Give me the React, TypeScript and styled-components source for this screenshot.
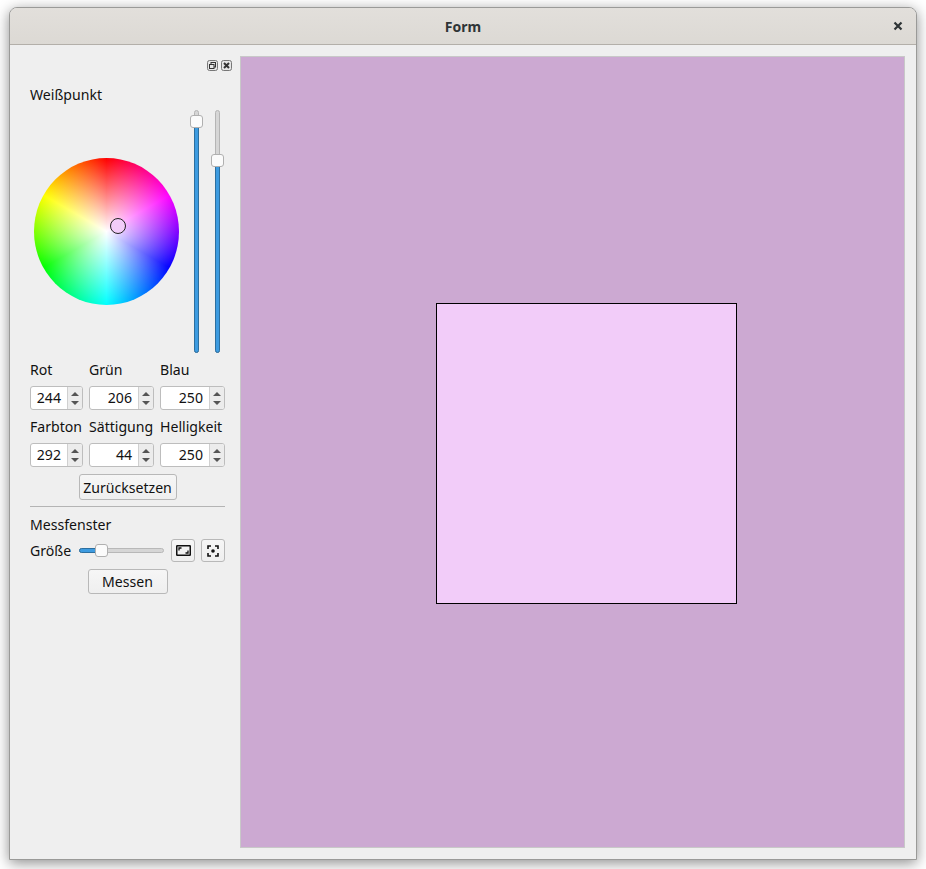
import React from "react";
import styled, { createGlobalStyle } from "styled-components";

const Global = createGlobalStyle`
  html, body { margin: 0; padding: 0; background: #fff; }
  body { width: 926px; height: 869px; overflow: hidden; font-family: "Noto Sans", "Open Sans", sans-serif; }
`;

const Desktop = styled.div`
  width: 926px;
  height: 869px;
  padding: 7px 9px;
  box-sizing: border-box;
`;

const Win = styled.div`
  width: 908px;
  height: 853px;
  box-sizing: border-box;
  display: flex;
  flex-direction: column;
  background: #efefef;
  border: 1px solid #9a9a98;
  border-radius: 8px 8px 0 0;
  box-shadow: 0 3px 14px rgba(0, 0, 0, 0.45);
  overflow: hidden;
`;

const TitleBar = styled.div`
  height: 37px;
  flex: none;
  box-sizing: border-box;
  display: flex;
  align-items: center;
  justify-content: center;
  position: relative;
  background: linear-gradient(#e2dfdb, #dcd9d4);
  border-bottom: 1px solid #b3afa9;
  font-weight: 700;
  font-size: 14px;
  color: #2e3436;
`;

const CloseGlyph = styled.svg`
  position: absolute;
  right: 13px;
  top: 13px;
`;

const Body = styled.div`
  flex: 1;
  display: flex;
  min-height: 0;
  padding: 11px 11px 11px 0;
`;

const Side = styled.div`
  width: 230px;
  flex: none;
  box-sizing: border-box;
  padding: 0 15px 0 20px;
  display: flex;
  flex-direction: column;
  font-size: 14.1px;
  line-height: 19px;
  color: #111;
`;

const DockBar = styled.div`
  height: 11px;
  display: flex;
  justify-content: flex-end;
  gap: 3px;
  margin-right: -7px;
  margin-top: 4px;
`;

const WhiteLabel = styled.div`
  margin-top: 14px;
  height: 19px;
`;

const PickerArea = styled.div`
  position: relative;
  height: 243px;
  margin-top: 6px;
  display: flex;
  justify-content: space-between;
`;

const Wheel = styled.div`
  position: absolute;
  left: 4px;
  top: 48px;
  width: 145px;
  height: 147px;
  border-radius: 50%;
  background:
    radial-gradient(closest-side, #fff 0%, rgba(255, 255, 255, 0) 100%),
    conic-gradient(#f00 0deg, #f0f 60deg, #00f 120deg, #0ff 180deg, #0f0 240deg, #ff0 300deg, #f00 360deg);
`;

const Marker = styled.div`
  position: absolute;
  left: 76px;
  top: 60px;
  width: 16px;
  height: 16px;
  box-sizing: border-box;
  border-radius: 50%;
  border: 1.3px solid #222;
  background: #f2ccf9;
`;

const VSliders = styled.div`
  margin-left: auto;
  margin-right: 5px;
  display: flex;
  gap: 16px;
  position: relative;
`;

const VTrack = styled.div`
  width: 5px;
  height: 243px;
  box-sizing: border-box;
  border-radius: 3px;
  border: 1px solid #b5b5b5;
  background: #d6d6d6;
  position: relative;
`;

const VFill = styled.div<{ $top: number }>`
  position: absolute;
  left: -1px;
  right: -1px;
  bottom: -1px;
  top: ${(p) => p.$top}px;
  background: #3d9be0;
  border: 1px solid #2d6f9f;
  border-radius: 3px;
`;

const VHandle = styled.div<{ $top: number }>`
  position: absolute;
  left: -5px;
  top: ${(p) => p.$top}px;
  width: 13px;
  height: 13px;
  box-sizing: border-box;
  border: 1px solid #b0b0b0;
  border-radius: 3px;
  background: #fbfbfb;
`;

const SpinGrid = styled.div`
  display: grid;
  grid-template-columns: 53px 65px 65px;
  column-gap: 6px;
  margin-top: 7px;
`;

const SpinLabel = styled.div`
  height: 19px;
  margin-bottom: 7px;
  white-space: nowrap;
`;

const SpinBox = styled.div`
  height: 24px;
  box-sizing: border-box;
  display: flex;
  border: 1px solid #bdbdbd;
  border-radius: 3px;
  background: #fff;
  margin-bottom: 7px;
  overflow: hidden;
`;

const SpinValue = styled.div`
  flex: 1;
  text-align: right;
  padding-right: 6px;
  line-height: 22px;
`;

const SpinArrows = styled.div`
  width: 14px;
  flex: none;
  background: #ececec;
  border-left: 1px solid #d0d0d0;
  display: flex;
  flex-direction: column;
  align-items: center;
  justify-content: center;
  gap: 5px;
`;

const Arrow = styled.svg`
  display: block;
`;

const CenterRow = styled.div`
  display: flex;
  justify-content: center;
`;

const PushButton = styled.div<{ $w: number; $h: number }>`
  width: ${(p) => p.$w}px;
  height: ${(p) => p.$h}px;
  box-sizing: border-box;
  border: 1px solid #b8b8b8;
  border-radius: 3px;
  background: linear-gradient(#f6f6f6, #efefef);
  display: flex;
  align-items: center;
  justify-content: center;
  white-space: nowrap;
`;

const Sep = styled.div`
  height: 1px;
  background: #b4b4b4;
  margin-top: 6px;
`;

const MeasureLabel = styled.div`
  margin-top: 8px;
  height: 19px;
`;

const SizeRow = styled.div`
  margin-top: 5px;
  height: 23px;
  display: flex;
  align-items: center;
`;

const SizeLabel = styled.div`
  width: 49px;
  flex: none;
`;

const HTrack = styled.div`
  width: 85px;
  height: 5px;
  box-sizing: border-box;
  position: relative;
  border: 1px solid #b8b8b8;
  border-radius: 3px;
  background: #d6d6d6;
  margin-right: 7px;
`;

const HFill = styled.div`
  position: absolute;
  left: -1px;
  top: -1px;
  bottom: -1px;
  width: 20px;
  background: #3d9be0;
  border: 1px solid #2d6f9f;
  box-sizing: border-box;
  border-radius: 3px;
`;

const HHandle = styled.div`
  position: absolute;
  left: 15px;
  top: -5px;
  width: 13px;
  height: 13px;
  box-sizing: border-box;
  border: 1px solid #b0b0b0;
  border-radius: 3px;
  background: #fbfbfb;
`;

const IconBtn = styled(PushButton)`
  flex: none;
  & + & {
    margin-left: 6px;
  }
`;

const MeasureRow = styled(CenterRow)`
  margin-top: 7px;
`;

const Canvas = styled.div`
  flex: 1;
  border: 1px solid #c8c8c8;
  background: #cca9d2;
  display: flex;
  align-items: center;
  justify-content: center;
`;

const Patch = styled.div`
  width: 301px;
  height: 301px;
  box-sizing: border-box;
  margin: 2px 0 0 28px;
  border: 1px solid #000;
  background: #f2ccf9;
`;

const Up = () => (
  <Arrow width="8" height="4" viewBox="0 0 8 4"><path d="M0 4 L4 0 L8 4Z" fill="#555" /></Arrow>
);
const Down = () => (
  <Arrow width="8" height="4" viewBox="0 0 8 4"><path d="M0 0 L4 4 L8 0Z" fill="#555" /></Arrow>
);

const Spin = ({ v }: { v: number }) => (
  <SpinBox>
    <SpinValue>{v}</SpinValue>
    <SpinArrows><Up /><Down /></SpinArrows>
  </SpinBox>
);

export default function App() {
  return (
    <Desktop>
      <Global />
      <Win>
        <TitleBar>
          Form
          <CloseGlyph width="10" height="10" viewBox="0 0 10 10">
            <path d="M1.5 1.5 L8.5 8.5 M8.5 1.5 L1.5 8.5" stroke="#2e3436" strokeWidth="2.2" />
          </CloseGlyph>
        </TitleBar>
        <Body>
          <Side>
            <DockBar>
              <svg width="11" height="11" viewBox="0 0 11 11">
                <rect x="0.5" y="0.5" width="10" height="10" rx="2" fill="#e6e6e6" stroke="#777" />
                <rect x="4" y="2.5" width="4.5" height="4.5" fill="none" stroke="#333" />
                <rect x="2.5" y="4.5" width="4.5" height="4" fill="#e6e6e6" stroke="#333" />
              </svg>
              <svg width="11" height="11" viewBox="0 0 11 11">
                <rect x="0.5" y="0.5" width="10" height="10" rx="2" fill="#e6e6e6" stroke="#777" />
                <path d="M3 3 L8 8 M8 3 L3 8" stroke="#333" strokeWidth="2" />
              </svg>
            </DockBar>
            <WhiteLabel>Weißpunkt</WhiteLabel>
            <PickerArea>
              <Wheel>
                <Marker />
              </Wheel>
              <VSliders>
                <VTrack>
                  <VFill $top={10} />
                  <VHandle $top={4} />
                </VTrack>
                <VTrack>
                  <VFill $top={50} />
                  <VHandle $top={43} />
                </VTrack>
              </VSliders>
            </PickerArea>
            <SpinGrid>
              <SpinLabel>Rot</SpinLabel>
              <SpinLabel>Grün</SpinLabel>
              <SpinLabel>Blau</SpinLabel>
              <Spin v={244} />
              <Spin v={206} />
              <Spin v={250} />
              <SpinLabel>Farbton</SpinLabel>
              <SpinLabel>Sättigung</SpinLabel>
              <SpinLabel>Helligkeit</SpinLabel>
              <Spin v={292} />
              <Spin v={44} />
              <Spin v={250} />
            </SpinGrid>
            <CenterRow>
              <PushButton $w={98} $h={26}>Zurücksetzen</PushButton>
            </CenterRow>
            <Sep />
            <MeasureLabel>Messfenster</MeasureLabel>
            <SizeRow>
              <SizeLabel>Größe</SizeLabel>
              <HTrack>
                <HFill />
                <HHandle />
              </HTrack>
              <IconBtn $w={24} $h={23}>
                <svg width="15" height="11" viewBox="0 0 15 11">
                  <rect x="0.75" y="0.75" width="13.5" height="9.5" rx="0.5" fill="none" stroke="#111" strokeWidth="1.5" />
                  <path d="M3 5.5 V3 H5.5 M12 5.5 V8 H9.5" fill="none" stroke="#111" strokeWidth="1.3" />
                </svg>
              </IconBtn>
              <IconBtn $w={24} $h={23}>
                <svg width="12" height="12" viewBox="0 0 12 12">
                  <path d="M1 4 V1 H4 M8 1 H11 V4 M11 8 V11 H8 M4 11 H1 V8" fill="none" stroke="#111" strokeWidth="1.6" />
                  <circle cx="6" cy="6" r="1.8" fill="#111" />
                </svg>
              </IconBtn>
            </SizeRow>
            <MeasureRow>
              <PushButton $w={80} $h={25}>Messen</PushButton>
            </MeasureRow>
          </Side>
          <Canvas>
            <Patch />
          </Canvas>
        </Body>
      </Win>
    </Desktop>
  );
}
